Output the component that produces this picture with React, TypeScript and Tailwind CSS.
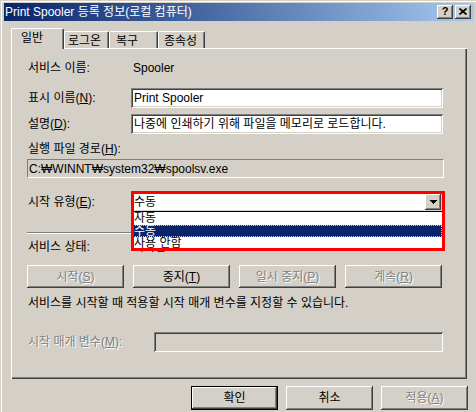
import React from 'react';

const raised =
  'shadow-[inset_-1px_-1px_#404040,inset_1px_1px_#ffffff,inset_-2px_-2px_#808080,inset_2px_2px_#d4d0c8]';
const sunken =
  'shadow-[inset_1px_1px_#808080,inset_-1px_-1px_#ffffff,inset_2px_2px_#404040,inset_-2px_-2px_#d4d0c8]';
const disabled = 'text-[#808080] [text-shadow:1px_1px_0_#ffffff]';

const Btn = ({ label, width, off, isDefault }: { label: React.ReactNode; width: string; off?: boolean; isDefault?: boolean }) => (
  <div
    className={`${width} h-full flex items-center justify-center bg-[#d4d0c8] ${
      isDefault
        ? 'border border-black shadow-[inset_-1px_-1px_#404040,inset_1px_1px_#ffffff,inset_-2px_-2px_#808080]'
        : raised
    } ${off ? disabled : ''}`}
  >
    {label}
  </div>
);

const Tab = ({ label, w, pl, active }: { label: string; w: string; pl: string; active?: boolean }) => (
  <div
    className={`${w} ${pl} flex items-center bg-[#d4d0c8] rounded-t-[2px] border-t border-l border-t-white border-l-white shadow-[inset_-1px_0_#808080] border-r border-r-[#404040] ${
      active ? 'h-[21px] -mb-px relative z-10 pb-[2px]' : 'h-[17px] pt-[1px]'
    }`}
  >
    {label}
  </div>
);

export default function App() {
  return (
    <div className="w-[476px] h-[412px] bg-[#d4d0c8] overflow-hidden pt-[3px] pl-[4px] pr-[2px] text-[12px] leading-[14px] text-black font-['Liberation_Sans','Noto_Sans_CJK_KR',sans-serif] shadow-[inset_1px_1px_#d4d0c8,inset_2px_2px_#ffffff]">
      {/* title bar */}
      <div className="h-[18px] flex items-center justify-between pl-[1px] pr-[3px] bg-linear-to-r from-[#0a246a] to-[#a6caf0]">
        <span className="text-white">Print Spooler 등록 정보(로컬 컴퓨터)</span>
        <div className="flex gap-[2px]">
          <div className={`w-[16px] h-[14px] bg-[#d4d0c8] ${raised} flex items-center justify-center font-bold text-[11px] leading-none pb-[1px]`}>
            ?
          </div>
          <div className={`w-[16px] h-[14px] bg-[#d4d0c8] ${raised} flex items-center justify-center pb-[1px]`}>
            <svg width="8" height="7" viewBox="0 0 8 7">
              <path d="M0.5 0.5 L7.5 6.5 M7.5 0.5 L0.5 6.5" stroke="#000" strokeWidth="1.7" />
            </svg>
          </div>
        </div>
      </div>

      <div className="pl-[7px] pr-[6px] pt-[7px]">
        {/* tabs */}
        <div className="h-[20px] flex items-end">
          <Tab label="일반" w="w-[53px]" pl="pl-[9px]" active />
          <Tab label="로그온" w="w-[45px]" pl="pl-[3px]" />
          <Tab label="복구" w="w-[49px]" pl="pl-[6px]" />
          <Tab label="종속성" w="w-[47px]" pl="pl-[5px]" />
        </div>

        {/* panel */}
        <div className="w-[456px] h-[331px] pl-[16px] pt-[10px] shadow-[inset_1px_1px_#ffffff,inset_-1px_-1px_#404040,inset_-2px_-2px_#808080]">
          <div className="h-[20px] flex items-center">
            <div className="w-[104px] pl-[1px]">서비스 이름:</div>
            <div className="pl-[2px]">Spooler</div>
          </div>

          <div className="mt-[10px] h-[20px] flex items-center">
            <div className="w-[104px] pl-[1px]">
              표시 이름(<u>N</u>):
            </div>
            <div className={`w-[312px] h-full bg-white ${sunken} flex items-center pl-[3px]`}>Print Spooler</div>
          </div>

          <div className="mt-[6px] h-[20px] flex items-center">
            <div className="w-[104px] pl-[1px]">
              설명(<u>D</u>):
            </div>
            <div className={`w-[312px] h-full bg-white ${sunken} flex items-center pl-[3px]`}>
              나중에 인쇄하기 위해 파일을 메모리로 로드합니다.
            </div>
          </div>

          <div className="mt-[8px] h-[14px] pl-[1px]">
            실행 파일 경로(<u>H</u>):
          </div>
          <div className="mt-[3px] w-[417px] h-[19px] flex items-center pl-[1px] border border-t-[#808080] border-l-[#808080] border-b-white border-r-white">
            C:₩WINNT₩system32₩spoolsv.exe
          </div>

          <div className="mt-[14px] h-[20px] flex items-center">
            <div className="w-[104px] pl-[1px]">
              시작 유형(<u>E</u>):
            </div>
            <div className="relative w-[312px] h-full">
              <div className={`w-full h-full bg-white ${sunken} flex items-center p-[2px]`}>
                <span className="flex-1 pl-[1px]">수동</span>
                <div className={`w-[16px] h-[16px] bg-[#d4d0c8] ${raised} flex items-center justify-center`}>
                  <svg width="7" height="4" viewBox="0 0 7 4" shapeRendering="crispEdges">
                    <path d="M0 0h7v1H0zM1 1h5v1H1zM2 2h3v1H2zM3 3h1v1H3z" fill="#000" />
                  </svg>
                </div>
              </div>
              {/* open drop-down list */}
              <div className="absolute left-0 top-[19px] w-[312px] bg-white border border-black z-10 leading-[13px]">
                <div className="h-[13px] pl-[2px]">자동</div>
                <div className="h-[12px] pl-[2px] leading-[12px] bg-[#0a246a] text-white outline outline-1 outline-dotted outline-[#d8cf9a] -outline-offset-1">
                  수동
                </div>
                <div className="h-[12px] pl-[2px] leading-[12px]">사용 안함</div>
              </div>
              {/* red highlight */}
              <div className="absolute left-0 top-[-1px] w-[314px] h-[60px] border-[3px] border-[#ff0000] z-20 pointer-events-none" />
            </div>
          </div>

          <div className="mt-[20px] w-[417px] h-[2px] border-t border-t-[#808080] border-b border-b-white" />

          <div className="mt-[6px] h-[14px] flex items-center">
            <div className="w-[104px] pl-[1px]">서비스 상태:</div>
            <div className="pl-[2px]">시작됨</div>
          </div>

          <div className="mt-[11px] h-[23px] flex gap-[9px]">
            <Btn width="w-[97px]" off label={<span>시작(<u>S</u>)</span>} />
            <Btn width="w-[97px]" label={<span>중지(<u>T</u>)</span>} />
            <Btn width="w-[97px]" off label={<span>일시 중지(<u>P</u>)</span>} />
            <Btn width="w-[97px]" off label={<span>계속(<u>R</u>)</span>} />
          </div>

          <div className="mt-[8px] h-[14px] pl-[1px]">
            서비스를 시작할 때 적용할 시작 매개 변수를 지정할 수 있습니다.
          </div>

          <div className="mt-[22px] h-[20px] flex items-center">
            <div className={`w-[127px] pl-[1px] ${disabled}`}>
              시작 매개 변수(<u>M</u>):
            </div>
            <div className={`w-[289px] h-full bg-[#d4d0c8] ${sunken}`} />
          </div>
        </div>

        {/* dialog buttons */}
        <div className="mt-[7px] h-[24px] flex justify-end gap-[8px]">
          <Btn width="w-[87px]" isDefault label="확인" />
          <Btn width="w-[87px]" label="취소" />
          <Btn width="w-[87px]" off label={<span>적용(<u>A</u>)</span>} />
        </div>
      </div>
    </div>
  );
}
